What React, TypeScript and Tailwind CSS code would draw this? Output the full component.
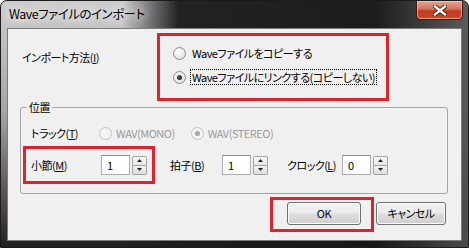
import type { ReactNode } from 'react'

const FONT =
  '[font-family:"Noto_Sans_CJK_JP","Noto_Sans",sans-serif] [font-feature-settings:"palt"] tracking-[-0.5px] whitespace-nowrap'

/** Win7 風ラジオボタン */
function Radio({ checked, disabled }: { checked?: boolean; disabled?: boolean }) {
  return (
    <span
      className={`w-[13px] h-[13px] rounded-full border flex items-center justify-center shrink-0 ${
        disabled
          ? 'border-[#c4c4c4] bg-[#f4f4f4]'
          : 'border-[#8a8b8c] bg-[radial-gradient(circle_at_40%_35%,#ffffff,#e4e4e4_70%,#d2d2d2)]'
      }`}
    >
      {checked && (
        <span
          className={`w-[5px] h-[5px] rounded-full ${
            disabled ? 'bg-[#a8a8a8]' : 'bg-[radial-gradient(circle_at_40%_35%,#5a5a5a,#111)]'
          }`}
        />
      )}
    </span>
  )
}

/** スピンボックス */
function Spin({ value }: { value: string }) {
  return (
    <div className="flex items-center gap-[2px]">
      <div className="w-[29px] h-[20px] bg-white border border-[#abadb3] border-t-[#8e8f8f] pl-[5px] text-[11px] leading-[18px] text-black">
        {value}
      </div>
      <div className="flex flex-col w-[15px] h-[19px]">
        <div className="flex-1 border border-[#a3a3a3] rounded-t-[2px] bg-[linear-gradient(#fafafa,#e6e6e6)] flex items-center justify-center">
          <svg width="5" height="3" viewBox="0 0 5 3">
            <path d="M2.5 0L5 3H0z" fill="#222" />
          </svg>
        </div>
        <div className="flex-1 border border-t-0 border-[#a3a3a3] rounded-b-[2px] bg-[linear-gradient(#f2f2f2,#dedede)] flex items-center justify-center">
          <svg width="5" height="3" viewBox="0 0 5 3">
            <path d="M0 0H5L2.5 3z" fill="#222" />
          </svg>
        </div>
      </div>
    </div>
  )
}

function Btn({ children, w }: { children: ReactNode; w: string }) {
  return (
    <div
      className={`${w} h-[23px] rounded-[3px] border border-[#707070] bg-[linear-gradient(#f2f2f2_0%,#ebebeb_48%,#dddddd_52%,#cfcfcf_100%)] shadow-[inset_0_0_0_1px_#fcfcfc] flex items-center justify-center text-[11px] text-black`}
    >
      {children}
    </div>
  )
}

export default function App() {
  return (
    <div
      className={`${FONT} w-[469px] h-[248px] flex flex-col rounded-t-[7px] border border-[#1b1b1b] overflow-hidden bg-[linear-gradient(90deg,rgba(0,0,0,0)_0%,rgba(0,0,0,0)_26%,rgba(30,28,30,0.97)_38%,rgba(24,22,24,0.97)_80%,rgba(80,80,80,0.9)_100%),linear-gradient(180deg,#cdcdcd_0%,#a6a6a6_45%,#5a5158_78%,#221f22_100%)]`}
    >
      {/* タイトルバー */}
      <div className="h-[27px] flex items-start justify-between shrink-0">
        <span className="pl-[8px] pt-[4px] text-[12.5px] leading-[18px] text-black [text-shadow:0_0_8px_#fff,0_0_12px_#fff]">
          Waveファイルのインポート
        </span>
        <div className="mr-[5px] -mt-px w-[47px] h-[20px] rounded-b-[4px] border border-[#4a1208] bg-[linear-gradient(#e7a594_0%,#d2735d_45%,#c3391f_55%,#c84a2c_100%)] shadow-[inset_0_0_0_1px_rgba(255,210,190,0.6)] flex items-center justify-center">
          <svg width="14" height="11" viewBox="0 0 14 11">
            <path d="M2 1.5L12 9.5M12 1.5L2 9.5" stroke="#3a1a14" strokeWidth="4.2" strokeLinecap="square" />
            <path d="M2 1.5L12 9.5M12 1.5L2 9.5" stroke="#fff" strokeWidth="2.4" strokeLinecap="square" />
          </svg>
        </div>
      </div>

      {/* クライアント領域 */}
      <div className="mx-[6px] mb-[6px] flex-1 bg-[#f0f0f0] border border-[#7c7c7c] flex flex-col text-[11px] text-black">
        {/* インポート方法 */}
        <div className="flex mt-[4px]">
          <div className="w-[149px] pl-[14px] pt-[16px] leading-[16px]">
            インポート方法(<u>I</u>)
          </div>
          <div className="w-[232px] h-[68px] border-[3px] border-[#dc232e] pl-[13px] pt-[9px] flex flex-col gap-[8px]">
            <div className="flex items-center gap-[5px] h-[16px]">
              <Radio />
              <span className="leading-[16px] px-[1px]">Waveファイルをコピーする</span>
            </div>
            <div className="flex items-center gap-[4px] h-[16px]">
              <Radio checked />
              <span className="leading-[14px] px-[1px] border border-dotted border-black">
                Waveファイルにリンクする(コピーしない)
              </span>
            </div>
          </div>
        </div>

        {/* 位置 */}
        <fieldset className="ml-[12px] mr-[13px] -mt-[1px] border border-[#a5a5a5] rounded-[3px] pl-[1px] pb-[9px]">
          <legend className="ml-[5px] px-[2px] leading-[14px]">位置</legend>
          <div className="flex items-center h-[20px] mt-[9px] pl-[9px]">
            <span className="w-[68px]">
              トラック(<u>T</u>)
            </span>
            <div className="flex items-center gap-[4px] text-[#9a9a9a]">
              <Radio disabled />
              <span>WAV(MONO)</span>
            </div>
            <div className="flex items-center gap-[4px] text-[#9a9a9a] ml-[16px]">
              <Radio checked disabled />
              <span>WAV(STEREO)</span>
            </div>
          </div>
          <div className="flex items-center mt-[3px]">
            <div className="ml-[1px] w-[132px] h-[38px] border-[3px] border-[#dc232e] pl-[5px] flex items-center">
              <span className="w-[70px]">
                小節(<u>M</u>)
              </span>
              <Spin value="1" />
            </div>
            <span className="ml-[15px] w-[52px]">
              拍子(<u>B</u>)
            </span>
            <Spin value="1" />
            <span className="ml-[19px] w-[55px]">
              クロック(<u>L</u>)
            </span>
            <Spin value="0" />
          </div>
        </fieldset>

        {/* ボタン */}
        <div className="flex justify-end items-start mt-[3px] mr-[15px]">
          <div className="w-[104px] h-[35px] border-[3px] border-[#dc232e] pl-[14px] pt-[2px]">
            <Btn w="w-[74px]">OK</Btn>
          </div>
          <div className="ml-[2px] mt-[5px]">
            <Btn w="w-[70px]">キャンセル</Btn>
          </div>
        </div>
      </div>
    </div>
  )
}
